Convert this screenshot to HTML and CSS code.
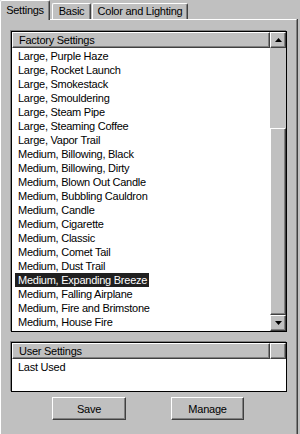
FILE: index.html
```html
<!DOCTYPE html>
<html>
<head>
<meta charset="utf-8">
<link rel="stylesheet" href="styles.css">
</head>
<body>
<div class="tabs">
  <div class="tab active tab-settings">Settings</div>
  <div class="tab tab-basic">Basic</div>
  <div class="tab tab-color">Color and Lighting</div>
</div>
<div class="panel">
  <div class="listbox factory">
    <div class="lb-main">
      <div class="lb-header">Factory Settings</div>
      <div class="lb-items">
        <div class="row"><span class="item">Large, Purple Haze</span></div>
        <div class="row"><span class="item">Large, Rocket Launch</span></div>
        <div class="row"><span class="item">Large, Smokestack</span></div>
        <div class="row"><span class="item">Large, Smouldering</span></div>
        <div class="row"><span class="item">Large, Steam Pipe</span></div>
        <div class="row"><span class="item">Large, Steaming Coffee</span></div>
        <div class="row"><span class="item">Large, Vapor Trail</span></div>
        <div class="row"><span class="item">Medium, Billowing, Black</span></div>
        <div class="row"><span class="item">Medium, Billowing, Dirty</span></div>
        <div class="row"><span class="item">Medium, Blown Out Candle</span></div>
        <div class="row"><span class="item">Medium, Bubbling Cauldron</span></div>
        <div class="row"><span class="item">Medium, Candle</span></div>
        <div class="row"><span class="item">Medium, Cigarette</span></div>
        <div class="row"><span class="item">Medium, Classic</span></div>
        <div class="row"><span class="item">Medium, Comet Tail</span></div>
        <div class="row"><span class="item">Medium, Dust Trail</span></div>
        <div class="row"><span class="item selected">Medium, Expanding Breeze</span></div>
        <div class="row"><span class="item">Medium, Falling Airplane</span></div>
        <div class="row"><span class="item">Medium, Fire and Brimstone</span></div>
        <div class="row"><span class="item">Medium, House Fire</span></div>
      </div>
    </div>
    <div class="scrollbar">
      <div class="sb-btn">
        <svg width="7" height="4" viewBox="0 0 7 4"><polygon points="0,4 7,4 3.5,0" fill="#000"/></svg>
      </div>
      <div class="sb-track">
        <div class="sb-space"></div>
        <div class="sb-thumb"></div>
      </div>
      <div class="sb-btn">
        <svg width="7" height="4" viewBox="0 0 7 4"><polygon points="0,0 7,0 3.5,4" fill="#000"/></svg>
      </div>
    </div>
  </div>

  <div class="listbox user">
    <div class="lb-main">
      <div class="hdr-row">
        <div class="lb-header grow">User Settings</div>
        <div class="lb-header blank"></div>
      </div>
      <div class="lb-items">
        <div class="row"><span class="item">Last Used</span></div>
      </div>
    </div>
  </div>

  <div class="buttons">
    <button class="btn btn-save">Save</button>
    <button class="btn btn-manage">Manage</button>
  </div>
</div>
</body>
</html>
```

FILE: styles.css
```css
* { box-sizing: border-box; }
html, body { margin: 0; padding: 0; }
body {
  width: 300px;
  height: 434px;
  overflow: hidden;
  background: #c0c0c0;
  font-family: "Liberation Sans", Arial, sans-serif;
  font-size: 11px;
  letter-spacing: -0.25px;
  color: #000;
}

.tabs {
  display: flex;
  align-items: flex-end;
  height: 19px;
  position: relative;
  z-index: 2;
}
.tab {
  height: 16px;
  line-height: 14px;
  text-align: center;
  white-space: nowrap;
  background: #c0c0c0;
  border-top: 1px solid #fff;
  border-left: 1px solid #fff;
  border-right: 1px solid #404040;
  box-shadow: inset -1px 0 0 #808080;
  border-radius: 2px 2px 0 0;
}
.tab.active {
  height: 20px;
  line-height: 19px;
  margin-bottom: -1px;
}
.tab-settings { width: 50px; }
.tab-basic { width: 39px; margin-left: 2px; }
.tab-color { width: 96px; margin-left: 1px; }

.panel {
  width: 297px;
  height: 430px;
  border-top: 1px solid #fff;
  border-left: 1px solid #fff;
  border-right: 1px solid #808080;
  box-shadow: 1px 0 0 #404040;
  padding: 11px 0 0 10px;
}

.listbox {
  width: 276px;
  border: 1px solid #000;
  box-shadow: -1px -1px 0 #808080;
  display: flex;
  background: #fff;
}
.factory { height: 301px; }
.user { height: 50px; margin-top: 10px; }

.lb-main {
  flex: 1;
  display: flex;
  flex-direction: column;
  min-width: 0;
}
.hdr-row { display: flex; }
.lb-header {
  height: 16px;
  line-height: 15px;
  padding-left: 6px;
  background: #c0c0c0;
  border-top: 1px solid #fff;
  border-left: 1px solid #fff;
  border-bottom: 1px solid #404040;
  border-right: 1px solid #404040;
  box-shadow: inset -1px -1px 0 #808080;
}
.lb-header.grow { flex: 1; }
.lb-header.blank { width: 16px; padding: 0; }

.lb-items { padding-top: 1px; }
.row { height: 14px; line-height: 14px; }
.item {
  display: inline-block;
  margin-left: 3px;
  padding: 0 2px 0 3px;
  white-space: nowrap;
}
.item.selected { background: #202020; color: #fff; }

.scrollbar {
  width: 16px;
  display: flex;
  flex-direction: column;
  background: #c0c0c0;
}
.sb-btn {
  height: 16px;
  display: flex;
  align-items: center;
  justify-content: center;
  background: #c0c0c0;
  border-top: 1px solid #fff;
  border-left: 1px solid #fff;
  border-right: 1px solid #404040;
  border-bottom: 1px solid #404040;
  box-shadow: inset -1px -1px 0 #808080;
}
.sb-track {
  flex: 1;
  display: flex;
  flex-direction: column;
  background: #c4c4c4;
}
.sb-space { height: 80px; }
.sb-thumb {
  flex: 1;
  background: #c0c0c0;
  border-top: 1px solid #fff;
  border-left: 1px solid #fff;
  border-right: 1px solid #404040;
  border-bottom: 1px solid #404040;
  box-shadow: inset -1px -1px 0 #808080;
}

.buttons {
  display: flex;
  margin-top: 5px;
  padding-left: 41px;
  gap: 45px;
}
.btn {
  height: 23px;
  padding: 0;
  margin: 0;
  font: inherit;
  letter-spacing: inherit;
  color: #000;
  background: #c0c0c0;
  border-top: 1px solid #fff;
  border-left: 1px solid #fff;
  border-right: 1px solid #404040;
  border-bottom: 1px solid #404040;
  box-shadow: inset -1px -1px 0 #808080;
}
.btn-save { width: 74px; }
.btn-manage { width: 73px; }
```
